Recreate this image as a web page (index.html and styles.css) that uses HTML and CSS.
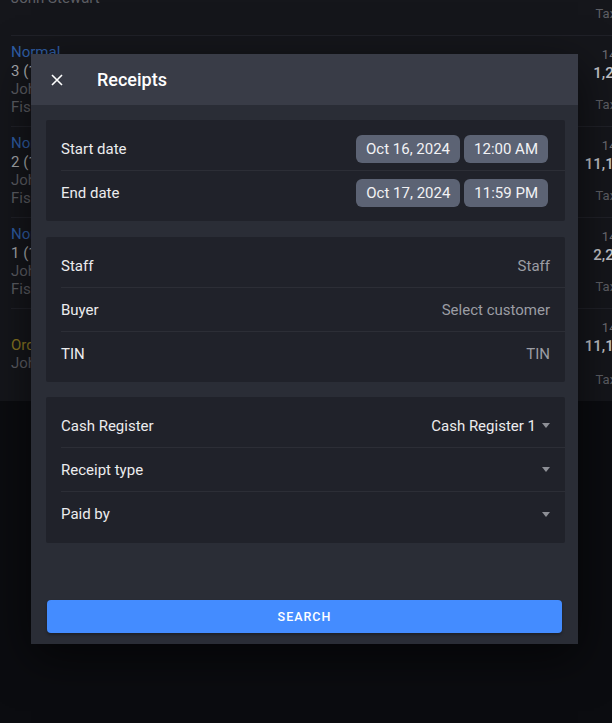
FILE: index.html
```html
<!DOCTYPE html>
<html lang="en">
<head>
    <meta charset="UTF-8">
    <meta name="viewport" content="width=device-width, initial-scale=1.0">
    <title>Receipts</title>
    <link rel="stylesheet" href="styles.css">
</head>
<body>
    <div class="list">
        <div class="order">
            <div class="info">
                <div class="type order-type">Order</div>
                <div class="sub">John Stewart</div>
            </div>
            <div class="sums">
                <div class="time">14:21:05</div>
                <div class="total">1,200.00</div>
                <div class="tax">Tax 20.00</div>
            </div>
        </div>
        <div class="order">
            <div class="info">
                <div class="type">Normal</div>
                <div class="num">3 (1 item)</div>
                <div class="sub">John Stewart</div>
                <div class="sub">Fiscal receipt</div>
            </div>
            <div class="sums">
                <div class="time">14:18:40</div>
                <div class="total">1,200.00</div>
                <div class="tax">Tax 20.00</div>
            </div>
        </div>
        <div class="order">
            <div class="info">
                <div class="type">Normal</div>
                <div class="num">2 (1 item)</div>
                <div class="sub">John Stewart</div>
                <div class="sub">Fiscal receipt</div>
            </div>
            <div class="sums">
                <div class="time">14:12:31</div>
                <div class="total">11,160.00</div>
                <div class="tax">Tax 20.00</div>
            </div>
        </div>
        <div class="order">
            <div class="info">
                <div class="type">Normal</div>
                <div class="num">1 (1 item)</div>
                <div class="sub">John Stewart</div>
                <div class="sub">Fiscal receipt</div>
            </div>
            <div class="sums">
                <div class="time">14:05:12</div>
                <div class="total">2,200.00</div>
                <div class="tax">Tax 20.00</div>
            </div>
        </div>
        <div class="order">
            <div class="info">
                <div class="type order-type">Order</div>
                <div class="sub">John Stewart</div>
            </div>
            <div class="sums">
                <div class="time">14:01:47</div>
                <div class="total">11,160.00</div>
                <div class="tax">Tax 20.00</div>
            </div>
        </div>
    </div>

    <div class="modal">
        <div class="modal-head">
            <svg class="close" width="12" height="12" viewBox="0 0 12 12">
                <path d="M1 1L11 11M11 1L1 11" stroke="#ffffff" stroke-width="1.6" fill="none"/>
            </svg>
            <h2>Receipts</h2>
        </div>

        <div class="modal-body">
            <div class="card">
                <div class="row">
                    <span class="label">Start date</span>
                    <div class="chips">
                        <span class="chip">Oct 16, 2024</span>
                        <span class="chip">12:00 AM</span>
                    </div>
                </div>
                <div class="row">
                    <span class="label">End date</span>
                    <div class="chips">
                        <span class="chip">Oct 17, 2024</span>
                        <span class="chip">11:59 PM</span>
                    </div>
                </div>
            </div>

            <div class="card">
                <div class="row">
                    <span class="label">Staff</span>
                    <span class="hint">Staff</span>
                </div>
                <div class="row">
                    <span class="label">Buyer</span>
                    <span class="hint">Select customer</span>
                </div>
                <div class="row">
                    <span class="label">TIN</span>
                    <span class="hint">TIN</span>
                </div>
            </div>

            <div class="card">
                <div class="row">
                    <span class="label">Cash Register</span>
                    <span class="select">Cash Register 1<i class="caret"></i></span>
                </div>
                <div class="row">
                    <span class="label">Receipt type</span>
                    <span class="select"><i class="caret"></i></span>
                </div>
                <div class="row">
                    <span class="label">Paid by</span>
                    <span class="select"><i class="caret"></i></span>
                </div>
            </div>
        </div>

        <div class="modal-foot">
            <button>Search</button>
        </div>
    </div>
</body>
</html>
```

FILE: styles.css
```css
body {
    margin: 0;
    height: 723px;
    overflow: hidden;
    background-color: #0b0c10;
    font-family: Roboto, "Liberation Sans", sans-serif;
}
.list {
    width: 641px;
    margin-top: -55px;
    padding-left: 11px;
    background: #15161b;
}
.order {
    display: flex;
    justify-content: space-between;
    height: 91px;
    box-sizing: border-box;
    border-bottom: 1px solid #202128;
}
.order:last-child {
    height: 92px;
    border-bottom: none;
}
.info {
    display: flex;
    flex-direction: column;
    justify-content: center;
    padding-bottom: 2px;
    font-size: 15px;
    line-height: 18.3px;
}
.type {
    color: #2f5ea6;
}
.order-type {
    color: #8c7822;
}
.num {
    color: #a9aaae;
}
.sub {
    color: #5d5e64;
}
.sums {
    display: flex;
    flex-direction: column;
    align-items: flex-end;
    padding: 11px 0 13px;
}
.time {
    font-size: 13px;
    line-height: 16px;
    color: #6c6d73;
}
.total {
    font-size: 15px;
    line-height: 20px;
    font-weight: 500;
    color: #c3c4c8;
}
.tax {
    margin-top: auto;
    font-size: 13px;
    line-height: 16px;
    color: #5d5e64;
}

.modal {
    position: absolute;
    left: 31px;
    top: 54px;
    width: 547px;
    height: 590px;
    background: #2a2d36;
    display: flex;
    flex-direction: column;
    box-shadow: 0 14px 44px rgba(0, 0, 0, 0.6);
}
.modal-head {
    height: 51px;
    flex-shrink: 0;
    display: flex;
    align-items: center;
    padding-left: 20px;
    background: #393c47;
}
.close {
    margin-right: 34px;
}
.modal-head h2 {
    margin: 0;
    font-size: 18px;
    font-weight: 500;
    color: #ffffff;
}
.modal-body {
    display: flex;
    flex-direction: column;
    gap: 15px;
    padding: 15px 13px 0 15px;
}
.card {
    background: #20222a;
    border-radius: 2px;
    padding: 7px 0 6px 15px;
}
.card:first-child {
    margin-bottom: 1px;
}
.card:last-child {
    padding-bottom: 7px;
}
.row {
    display: flex;
    align-items: center;
    justify-content: space-between;
    height: 44px;
    box-sizing: border-box;
    padding-right: 15px;
    border-bottom: 1px solid #2c2e36;
}
.row:last-child {
    border-bottom: none;
}
.label {
    font-size: 15px;
    color: #ececee;
}
.hint {
    font-size: 15px;
    color: #9b9da4;
}
.chips {
    display: flex;
    gap: 4px;
    margin-right: 2px;
}
.chip {
    height: 28px;
    line-height: 28px;
    padding: 0 10px;
    border-radius: 6px;
    background: #5c6374;
    color: #f2f2f4;
    font-size: 15px;
}
.select {
    display: flex;
    align-items: center;
    font-size: 15px;
    color: #ececee;
}
.caret {
    width: 0;
    height: 0;
    margin-left: 6px;
    border-left: 4.5px solid transparent;
    border-right: 4.5px solid transparent;
    border-top: 5px solid #8d8f96;
}
.modal-foot {
    margin-top: auto;
    padding: 0 16px 11px 16px;
}
button {
    width: 100%;
    height: 33px;
    border: none;
    border-radius: 4px;
    background-color: #448cff;
    color: #ffffff;
    font-family: Roboto, sans-serif;
    font-size: 12.5px;
    font-weight: 500;
    letter-spacing: 1px;
    text-transform: uppercase;
    box-shadow: 0 2px 3px rgba(0, 0, 0, 0.3);
    cursor: pointer;
}
```
